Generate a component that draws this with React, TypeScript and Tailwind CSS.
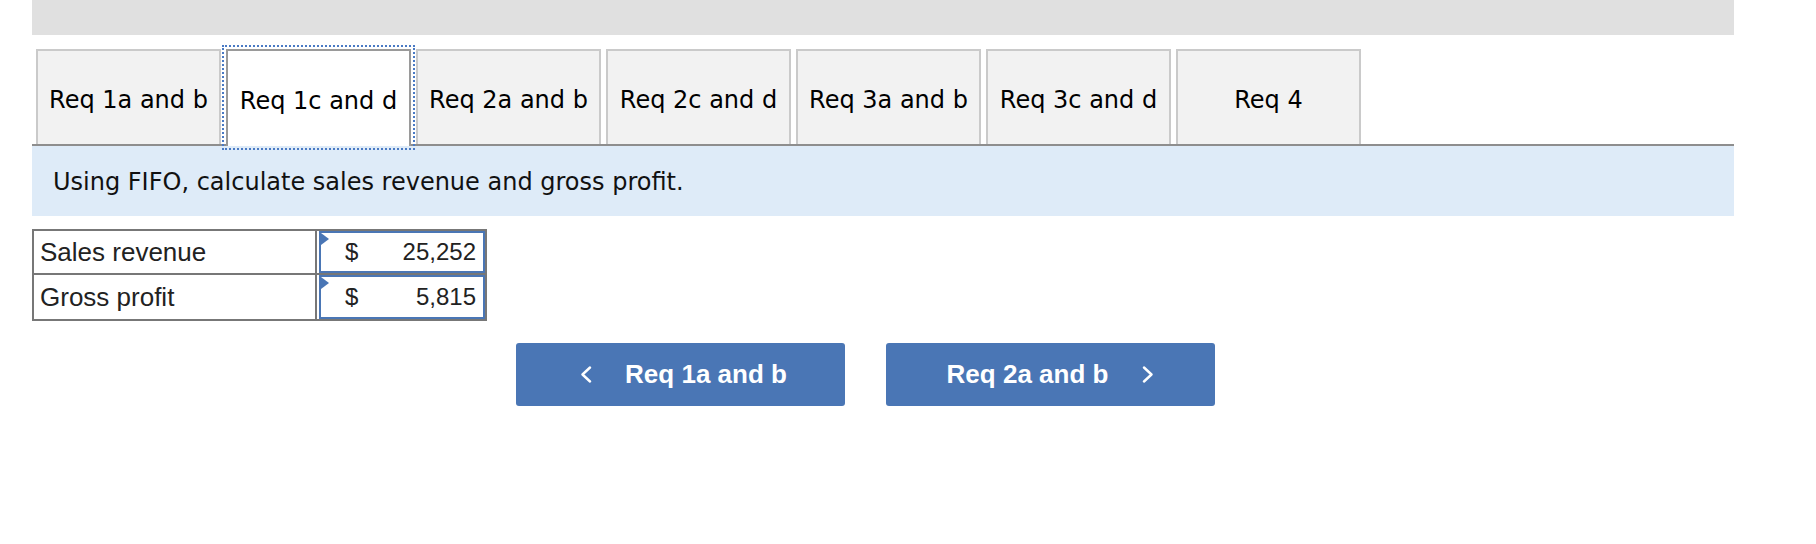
import React from 'react'

const TABS = [
  'Req 1a and b',
  'Req 1c and d',
  'Req 2a and b',
  'Req 2c and d',
  'Req 3a and b',
  'Req 3c and d',
  'Req 4',
]

const ACTIVE = 1

const ROWS = [
  { label: 'Sales revenue', value: '25,252' },
  { label: 'Gross profit', value: '5,815' },
]

function Chevron({ dir }: { dir: 'left' | 'right' }) {
  return (
    <svg width="12" height="17" viewBox="0 0 12 17" fill="none">
      <polyline
        points={dir === 'left' ? '10,1.5 2.5,8.5 10,15.5' : '2,1.5 9.5,8.5 2,15.5'}
        stroke="white"
        strokeWidth="2.4"
        strokeLinecap="round"
        strokeLinejoin="round"
      />
    </svg>
  )
}

export default function App() {
  return (
    <div className="min-h-[544px] bg-white">
      <div className="ml-[32px] w-[1702px]">
        {/* top gray strip */}
        <div className="h-[35px] bg-[#e0e0e0]" />

        {/* tab strip */}
        <div className="mt-[14px] flex gap-[5px] border-b-2 border-[#8e8e8e] pl-[4px] font-['DejaVu_Sans',sans-serif] text-[24px] text-black">
          {TABS.map((t, i) =>
            i === ACTIVE ? (
              <div
                key={t}
                className="relative z-10 -mb-[2px] flex h-[97px] w-[185px] items-center justify-center border-2 border-b-0 border-[#9a9a9a] bg-white pt-[4px] outline-2 outline-offset-[2px] outline-dotted outline-[#4a7ac4]"
              >
                <span className="leading-[28px]">{t}</span>
              </div>
            ) : (
              <div
                key={t}
                className="flex h-[95px] w-[185px] items-center justify-center border-2 border-b-0 border-[#cacaca] bg-[#f2f2f2] pt-[4px]"
              >
                <span className="leading-[28px]">{t}</span>
              </div>
            )
          )}
        </div>

        {/* instructions */}
        <div className="flex h-[70px] items-center bg-[#deebf8] pl-[21px] pt-[2px] font-['DejaVu_Sans',sans-serif] text-[24px] leading-[28px] text-[#111]">
          Using FIFO, calculate sales revenue and gross profit.
        </div>

        {/* answer table */}
        <div className="mt-[13px] w-[455px] border-2 border-[#777] font-['Liberation_Sans',Arial,sans-serif] text-[#222]">
          {ROWS.map((r, i) => (
            <div
              key={r.label}
              className={`flex h-[44px] ${i === 0 ? 'border-b-2 border-[#777]' : ''}`}
            >
              <div className="flex w-[283px] items-center border-r-2 border-[#777] pl-[6px] text-[26px]">
                {r.label}
              </div>
              <div className="relative ml-[2px] flex flex-1 items-center border-2 border-[#4a76b5] pl-[24px] pr-[7px] text-[24px]">
                <span className="absolute left-0 top-0 h-0 w-0 border-b-[6px] border-l-[8px] border-t-[6px] border-b-transparent border-l-[#4a76b5] border-t-transparent" />
                <span>$</span>
                <span className="ml-auto">{r.value}</span>
              </div>
            </div>
          ))}
        </div>

        {/* navigation buttons */}
        <div className="mt-[22px] flex gap-[41px] pl-[484px] font-['Liberation_Sans',Arial,sans-serif] text-[26px] font-bold text-white">
          <button
            type="button"
            className="flex h-[63px] w-[329px] items-center justify-center gap-[33px] rounded-[3px] bg-[#4a76b5] pl-[6px]"
          >
            <Chevron dir="left" />
            <span>Req 1a and b</span>
          </button>
          <button
            type="button"
            className="flex h-[63px] w-[329px] items-center justify-center gap-[34px] rounded-[3px] bg-[#4a76b5]"
          >
            <span>Req 2a and b</span>
            <Chevron dir="right" />
          </button>
        </div>
      </div>
    </div>
  )
}
